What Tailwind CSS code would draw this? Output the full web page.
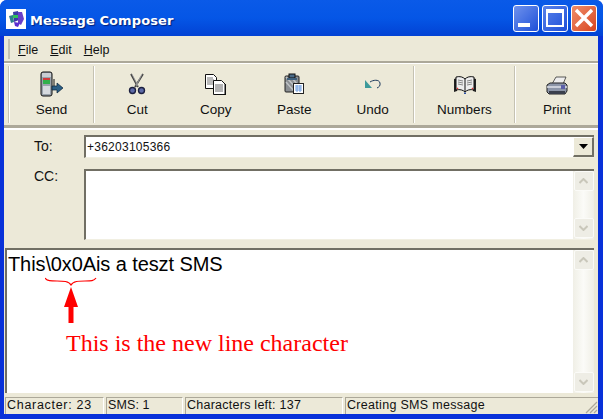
<!DOCTYPE html>
<html><head><meta charset="utf-8"><script src="https://cdn.jsdelivr.net/npm/@tailwindcss/browser@4"></script></head>
<body class="bg-white">
<div class="w-[603px] h-[419px] overflow-hidden flex flex-col rounded-t-[7px] bg-[#0831d9] font-['Liberation_Sans',sans-serif] text-[13px] text-black">
  <!-- title bar -->
  <div class="h-[36px] shrink-0 flex items-center pl-[6px] pr-[6px] bg-gradient-to-b from-[#0a5ae8] via-[#0556e6] to-[#0342d4]">
    <svg class="w-[20px] h-[20px] shrink-0 mt-[2px]" viewBox="0 0 20 20"><rect width="20" height="20" fill="#fff"/><path d="M7 3l5-1 1 9-5 2z" fill="#3c3ca8"/><path d="M12 3h4l2 7-3 6-3-2z" fill="#6a3fc8"/><path d="M3 7l4-1 1 7-3 1z" fill="#2f7f8f"/><path d="M7 6h5v3H7z" fill="#31c25a"/><path d="M8 13l6 1-2 4-3-1z" fill="#5b2fd0"/></svg>
    <span class="ml-[4px] pt-[5px] font-['DejaVu_Sans',sans-serif] font-bold text-[13px] text-white [text-shadow:1px_1px_1px_#02207a] tracking-[0.1px]">Message Composer</span>
    <div class="ml-auto flex gap-[3px]">
      <div class="w-[26px] h-[27px] rounded-[3px] border border-white bg-gradient-to-br from-[#6f91ec] to-[#1e4ed8] flex items-end pl-[4px] pb-[4px]"><div class="w-[12px] h-[4px] bg-white"></div></div>
      <div class="w-[26px] h-[27px] rounded-[3px] border border-white bg-gradient-to-br from-[#5a82ea] to-[#1e4ed8] flex items-center justify-center"><div class="w-[18px] h-[18px] border-2 border-t-4 border-white"></div></div>
      <div class="w-[26px] h-[27px] rounded-[3px] border border-white bg-gradient-to-br from-[#ee8c68] to-[#d8431c] flex items-center justify-center"><svg class="w-[20px] h-[20px]" viewBox="0 0 20 20"><path d="M2 2l16 16M18 2L2 18" stroke="#fff" stroke-width="3.4"/></svg></div>
    </div>
  </div>
  <!-- client -->
  <div class="flex-1 min-h-0 ml-[4px] mr-[5px] mb-[5px] bg-[#ece9d8] flex flex-col">
    <!-- menu -->
    <div class="h-[27px] shrink-0 flex items-center border-b-2 border-[#aca899] pl-[4px]">
      <div class="w-[2px] h-[20px] bg-[#c5c2b2]"></div>
      <div class="ml-[8px] pt-[3px] flex gap-[12px] text-[12.5px] text-[#111]">
        <span><u>F</u>ile</span><span><u>E</u>dit</span><span><u>H</u>elp</span>
      </div>
    </div>
    <!-- toolbar -->
    <div class="h-[65px] shrink-0 flex pt-[2px] pb-[2px] border-t border-white border-b-[3px] border-b-[#aca899] text-[13.5px] text-[#111]">
      <div class="ml-[4px] w-[2px] bg-[#c5c2b2] border-r border-white"></div>
      <div class="w-[83px] flex flex-col items-center">
        <div class="h-[36px] flex items-center">
          <svg class="w-[24px] h-[26px]" viewBox="0 0 24 26"><rect x="1" y="1" width="11" height="24" rx="2" fill="#9aa3ac" stroke="#111"/><rect x="2" y="2" width="9" height="4" fill="#c9ced3"/><rect x="3" y="7" width="7" height="6" fill="#2fb04a"/><rect x="3" y="7" width="7" height="2" fill="#d23b3b"/><rect x="3" y="15" width="7" height="8" fill="#d6dade"/><path d="M14 8v9" stroke="#111"/><path d="M12 15h5v-3l6 5-6 5v-3h-5z" fill="#2b5f86" stroke="#0a2238" stroke-width=".7"/></svg>
        </div>
        <span class="leading-[16px]">Send</span>
      </div>
      <div class="w-[2px] bg-[#c5c2b2] border-r border-white"></div>
      <div class="pl-[3px] w-[318px] flex">
        <div class="w-[78.5px] flex flex-col items-center">
          <div class="h-[36px] flex items-center">
            <svg class="w-[18px] h-[22px]" viewBox="0 0 18 22"><path d="M3 1l7 13M15 1L7 14" stroke="#444" stroke-width="1.8"/><path d="M4 1l6 12M14 1L8 13" stroke="#bbb" stroke-width=".7"/><circle cx="4.500" cy="17.500" r="3" fill="#5d6aa8" stroke="#1c2040" stroke-width="1.400"/><circle cx="13.500" cy="17.500" r="3" fill="#5d6aa8" stroke="#1c2040" stroke-width="1.400"/></svg>
          </div>
          <span class="leading-[16px]">Cut</span>
        </div>
        <div class="w-[78.5px] flex flex-col items-center">
          <div class="h-[36px] flex items-center">
            <svg class="w-[21px] h-[21px]" viewBox="0 0 21 21"><path d="M.5.5h8l3 3v11H.5z" fill="#fff" stroke="#111"/><path d="M2 4h6M2 6h7M2 8h7M2 10h7" stroke="#777"/><path d="M8.500 6.500h8l3.500 3.500v10.500H8.500z" fill="#fff" stroke="#111"/><path d="M10 11h8M10 13h8M10 15h8M10 17h8" stroke="#666"/><path d="M20.500 10v11H9" fill="none" stroke="#111"/></svg>
          </div>
          <span class="leading-[16px]">Copy</span>
        </div>
        <div class="w-[78.5px] flex flex-col items-center">
          <div class="h-[36px] flex items-center">
            <svg class="w-[20px] h-[22px]" viewBox="0 0 20 22"><rect x="1" y="3" width="14" height="16" rx="1" fill="#8b8f93" stroke="#222"/><path d="M2 4l12 13M2 9l8 9M7 4l7 8" stroke="#bfc3c6" stroke-width="1.500"/><rect x="5" y="1" width="6" height="4" fill="#4a6a86" stroke="#111"/><path d="M3 5h10v2H3z" fill="#3e5f7c"/><rect x="9.500" y="10.500" width="10" height="10" fill="#fff" stroke="#222"/><path d="M11 13h7M11 15h7M11 17h7M13 12v7M16 12v7" stroke="#6f9ee0"/></svg>
          </div>
          <span class="leading-[16px]">Paste</span>
        </div>
        <div class="w-[78.5px] flex flex-col items-center">
          <div class="h-[36px] flex items-center">
            <svg class="w-[16px] h-[10px]" viewBox="0 0 16 10"><path d="M5 3c3-2 9-3 10 1 .5 3-1 4-3 5" fill="none" stroke="#1c3a5c"/><path d="M0 1v8h7z" fill="#3c9a9a"/></svg>
          </div>
          <span class="leading-[16px]">Undo</span>
        </div>
      </div>
      <div class="w-[2px] bg-[#c5c2b2] border-r border-white"></div>
      <div class="w-[99px] flex flex-col items-center">
        <div class="h-[36px] flex items-center pt-[2px]">
          <svg class="w-[22px] h-[18px]" viewBox="0 0 22 18"><path d="M0 3l3-1v13l-3 1z" fill="#222"/><path d="M19 2l3 1v13l-3-1z" fill="#222"/><path d="M2 1c4-1 7 0 9 2 2-2 5-3 9-2v13c-4-1-7 0-9 2-2-2-5-3-9-2z" fill="#eee" stroke="#111"/><path d="M11 3v13" stroke="#111"/><path d="M4 4l5 1M4 6l5 1M4 8l5 1M13 5l5-1M13 7l5-1M13 9l5-1" stroke="#888"/><path d="M3 13l1-1M19 13l-1-1" stroke="#d33" stroke-width="1.500"/><path d="M10 16.500h2V18h-2z" fill="#2b4fa0"/></svg>
        </div>
        <span class="leading-[16px]">Numbers</span>
      </div>
      <div class="w-[2px] bg-[#c5c2b2] border-r border-white"></div>
      <div class="flex-1 flex flex-col items-center">
        <div class="h-[36px] flex items-center pt-[2px]">
          <svg class="w-[22px] h-[19px]" viewBox="0 0 22 19"><path d="M6 8l4-7h10l-3 7z" fill="#eee" stroke="#333" stroke-width=".8"/><path d="M1 9l3-2h15l2 2v6l-2 3H3l-2-2z" fill="#8c95a8" stroke="#222"/><path d="M1 11h20" stroke="#dfe2ea" stroke-width="1.500"/><path d="M3 15h16v3H3z" fill="#3a3f4c"/><path d="M15 9h4v4h-4z" fill="#5b5fa8"/></svg>
        </div>
        <span class="leading-[16px]">Print</span>
      </div>
    </div>
    <!-- recipients -->
    <div class="h-[120px] shrink-0 border-t-2 border-white relative">
      <div class="flex items-center pt-[4px] h-[28px]">
        <span class="w-[80px] pl-[30px] text-[14px] text-[#111]">To:</span>
        <div class="w-[510px] h-[23px] bg-white border-t-2 border-l-2 border-[#716f64] border-b border-b-[#f1efe2] border-r-0 flex items-center pl-[1px] text-[12px] text-[#111] tracking-[0.25px]">
          <span class="flex-1">+36203105366</span>
          <div class="w-[21px] h-[20px] bg-[#ece9d8] border border-[#716f64] border-t-white border-l-white border-b-2 border-r-2 flex items-center justify-center"><svg class="w-[9px] h-[5px]" viewBox="0 0 9 5"><path d="M0 0h9L4.500 5z"/></svg></div>
        </div>
      </div>
      <div class="flex mt-[11px]">
        <span class="w-[80px] pl-[30px] text-[14px] text-[#111] leading-[15px]">CC:</span>
        <div class="w-[510px] h-[71px] bg-white border-t-2 border-l-2 border-[#716f64] border-b border-b-[#f1efe2] flex justify-end">
          <div class="w-[21px] h-full bg-gradient-to-r from-[#f0efe6] via-[#fbfbf8] to-[#f0efe6] flex flex-col justify-between pb-[1px]">
            <div class="h-[20px] w-[20px] mx-auto bg-[#eeede5] border border-[#fbfbf8] rounded-[2px] flex items-center justify-center"><svg class="w-[9px] h-[6px]" viewBox="0 0 9 6"><path d="M.5 5l4-4 4 4" fill="none" stroke="#c9c7ba" stroke-width="2"/></svg></div>
            <div class="h-[20px] w-[20px] mx-auto bg-[#eeede5] border border-[#fbfbf8] rounded-[2px] flex items-center justify-center"><svg class="w-[9px] h-[6px]" viewBox="0 0 9 6"><path d="M.5 1l4 4 4-4" fill="none" stroke="#c9c7ba" stroke-width="2"/></svg></div>
          </div>
        </div>
      </div>
    </div>
    <!-- message -->
    <div class="flex-1 min-h-0 ml-[1px] mr-[4px] relative bg-white border-t-2 border-l-2 border-[#716f64] flex">
      <div class="flex-1 relative">
        <p class="pl-[1px] pt-[3px] text-[20px] leading-[22px] text-black tracking-[-0.1px]">This\0x0Ais a teszt SMS</p>
        <!-- annotation: brace and arrow drawn over the text -->
        <svg class="absolute left-[38px] top-[26px] w-[52px] h-[50px]" viewBox="0 0 52 50"><path d="M0 2c2 3 6 3 12 3 6 0 12 0 14 4 2-4 8-4 14-4s9 0 11-3" fill="none" stroke="#f00" stroke-width="1.200"/><path d="M26 11l7 20h-4.500v16h-5V31H19z" fill="#f00"/></svg>
        <p class="absolute left-[59px] top-[79px] font-['Liberation_Serif',serif] text-[24px] leading-[28px] text-[#f00] whitespace-nowrap">This is the new line character</p>
      </div>
      <div class="w-[21px] h-full bg-gradient-to-r from-[#f0efe6] via-[#fbfbf8] to-[#f0efe6] flex flex-col justify-between pb-[1px]">
        <div class="h-[20px] w-[20px] mx-auto bg-[#eeede5] border border-[#fbfbf8] rounded-[2px] flex items-center justify-center"><svg class="w-[9px] h-[6px]" viewBox="0 0 9 6"><path d="M.5 5l4-4 4 4" fill="none" stroke="#c9c7ba" stroke-width="2"/></svg></div>
        <div class="h-[20px] w-[20px] mx-auto bg-[#eeede5] border border-[#fbfbf8] rounded-[2px] flex items-center justify-center"><svg class="w-[9px] h-[6px]" viewBox="0 0 9 6"><path d="M.5 1l4 4 4-4" fill="none" stroke="#c9c7ba" stroke-width="2"/></svg></div>
      </div>
    </div>
    <!-- status -->
    <div class="h-[21px] shrink-0 flex pt-[4px] pl-[1px] gap-[2px] text-[12.5px] leading-[15px] text-[#111] relative">
      <div class="w-[99px] border-t border-l border-[#aca899] border-r border-r-white pl-[1px] tracking-[0.7px]">Character: 23</div>
      <div class="w-[77px] border-t border-l border-[#aca899] border-r border-r-white pl-[1px] tracking-[0.1px]">SMS: 1</div>
      <div class="w-[158px] border-t border-l border-[#aca899] border-r border-r-white pl-[1px] tracking-[0.25px]">Characters left: 137</div>
      <div class="flex-1 border-t border-l border-[#aca899] pl-[1px] tracking-[0.3px]">Creating SMS message</div>
      <svg class="absolute right-0 bottom-0 w-[13px] h-[13px]" viewBox="0 0 13 13"><path d="M12 1L1 12M12 5l-7 7M12 9l-3 3" stroke="#aca899" stroke-width="1.200"/></svg>
    </div>
  </div>
</div>
</body></html>
